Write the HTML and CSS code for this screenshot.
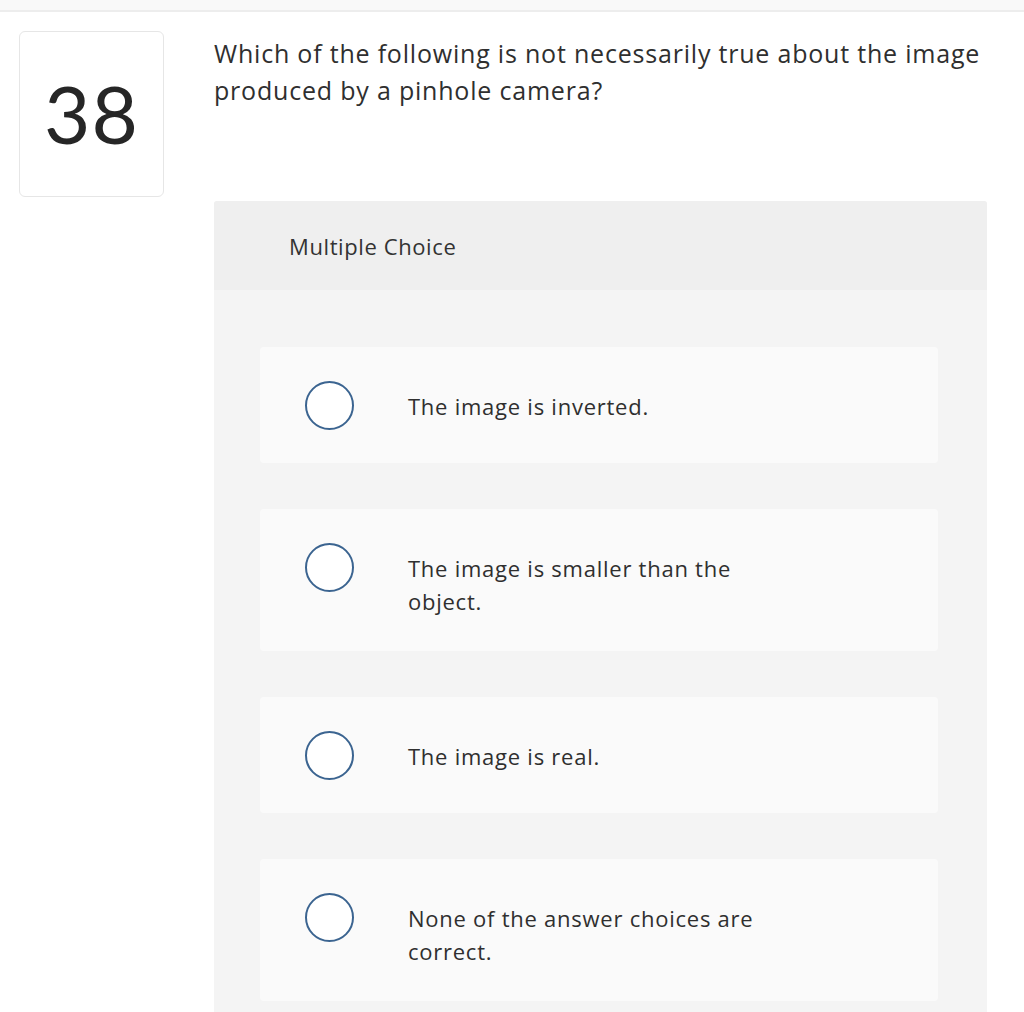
FILE: index.html
```html
<!DOCTYPE html>
<html lang="en">
<head>
<meta charset="utf-8">
<title>Question 38</title>
<link rel="stylesheet" href="styles.css">
</head>
<body>
<div class="topbar"></div>
<main class="question">
  <div class="qnum">38</div>
  <div class="qmain">
    <p class="prompt">Which of the following is not necessarily true about the image produced by a pinhole camera?</p>
    <section class="panel">
      <header class="panel-head">Multiple Choice</header>
      <div class="panel-body">
        <div class="option"><span class="radio"></span><span class="label">The image is inverted.</span></div>
        <div class="option"><span class="radio"></span><span class="label">The image is smaller than the object.</span></div>
        <div class="option"><span class="radio"></span><span class="label">The image is real.</span></div>
        <div class="option"><span class="radio"></span><span class="label">None of the answer choices are correct.</span></div>
      </div>
    </section>
  </div>
</main>
</body>
</html>
```

FILE: styles.css
```css
html, body {
  margin: 0;
  padding: 0;
  background: #ffffff;
}
body {
  font-family: "Open Sans", "Lato", "Liberation Sans", sans-serif;
  color: #2f2f2f;
  overflow: hidden;
  height: 1012px;
}
.topbar {
  height: 10px;
  background: #f9f9f9;
  border-bottom: 2px solid #ededed;
}
.question {
  display: flex;
  align-items: flex-start;
  padding: 19px 0 0 19px;
}
.qnum {
  box-sizing: border-box;
  width: 145px;
  height: 166px;
  border: 1px solid #e6e6e6;
  border-radius: 6px;
  display: flex;
  align-items: center;
  justify-content: center;
  font-family: "Lato", "Open Sans", sans-serif;
  font-size: 80px;
  font-weight: 400;
  color: #262626;
  letter-spacing: 1px;
  padding-bottom: 2px;
}
.qmain {
  margin-left: 50px;
  width: 773px;
}
.prompt {
  margin: 4px 0 0 0;
  font-size: 25px;
  letter-spacing: 0.8px;
  line-height: 37px;
  color: #2f2f2f;
  height: 166px;
}
.panel {
  background: #f4f4f4;
  border-radius: 3px 3px 0 0;
  height: 811px;
}
.panel-head {
  background: #efefef;
  height: 89px;
  box-sizing: border-box;
  padding-left: 75px;
  display: flex;
  align-items: center;
  font-size: 22px;
  letter-spacing: 0.6px;
  color: #333;
  border-radius: 3px 3px 0 0;
}
.panel-body {
  padding: 57px 49px 0 46px;
  display: flex;
  flex-direction: column;
  gap: 46px;
}
.option {
  background: #fafafa;
  border-radius: 4px;
  display: flex;
  align-items: flex-start;
  padding: 34px 0 33px 45px;
}
.radio {
  flex: none;
  box-sizing: border-box;
  width: 49px;
  height: 49px;
  border: 2px solid #3b6490;
  border-radius: 50%;
  background: #ffffff;
}
.label {
  margin-left: 54px;
  padding-top: 9px;
  width: 370px;
  font-size: 22px;
  letter-spacing: 0.75px;
  line-height: 33px;
  color: #2f2f2f;
}
```
